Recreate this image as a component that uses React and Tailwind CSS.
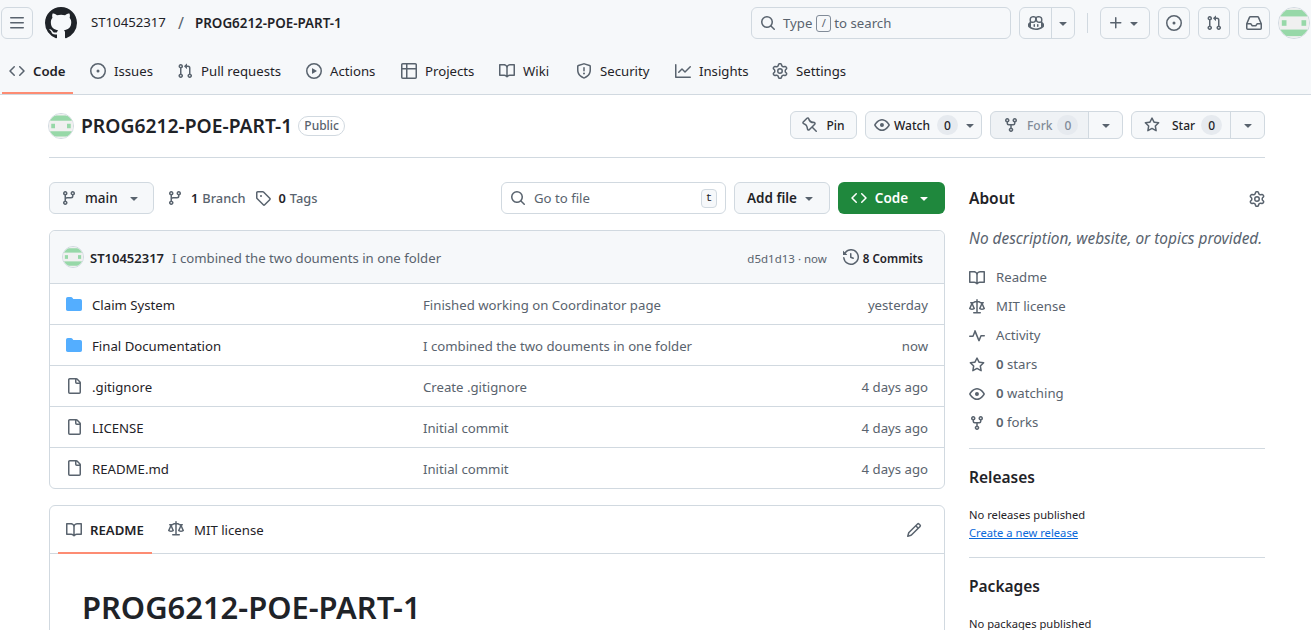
import React from "react";

const paths = {
  code: "M11.28 3.22l4.25 4.25a.75.75 0 0 1 0 1.06l-4.25 4.25a.749.749 0 0 1-1.275-.326.749.749 0 0 1 .215-.734L13.94 8l-3.72-3.72a.749.749 0 0 1 .326-1.275.749.749 0 0 1 .734.215Zm-6.56 0a.751.751 0 0 1 1.042.018.751.751 0 0 1 .018 1.042L2.06 8l3.72 3.72a.749.749 0 0 1-.326 1.275.749.749 0 0 1-.734-.215L.47 8.53a.75.75 0 0 1 0-1.06Z",
  issue: "M8 9.5a1.5 1.5 0 1 0 0-3 1.5 1.5 0 0 0 0 3Z M8 0a8 8 0 1 1 0 16A8 8 0 0 1 8 0ZM1.5 8a6.5 6.5 0 1 0 13 0 6.5 6.5 0 0 0-13 0Z",
  pull: "M1.5 3.25a2.25 2.25 0 1 1 3 2.122v5.256a2.251 2.251 0 1 1-1.5 0V5.372A2.25 2.25 0 0 1 1.5 3.25Zm5.677-.177L9.573.677A.25.25 0 0 1 10 .854V2.5h1A2.5 2.5 0 0 1 13.5 5v5.628a2.251 2.251 0 1 1-1.5 0V5a1 1 0 0 0-1-1h-1v1.646a.25.25 0 0 1-.427.177L7.177 3.427a.25.25 0 0 1 0-.354ZM3.75 2.5a.75.75 0 1 0 0 1.5.75.75 0 0 0 0-1.5Zm0 9.5a.75.75 0 1 0 0 1.5.75.75 0 0 0 0-1.5Zm8.25.75a.75.75 0 1 0 1.5 0 .75.75 0 0 0-1.5 0Z",
  play: "M8 0a8 8 0 1 1 0 16A8 8 0 0 1 8 0ZM1.5 8a6.5 6.5 0 1 0 13 0 6.5 6.5 0 0 0-13 0Zm4.879-2.773 4.264 2.559a.25.25 0 0 1 0 .428l-4.264 2.559A.25.25 0 0 1 6 10.559V5.442a.25.25 0 0 1 .379-.215Z",
  table: "M0 1.75C0 .784.784 0 1.75 0h12.5C15.216 0 16 .784 16 1.75v12.5A1.75 1.75 0 0 1 14.25 16H1.75A1.75 1.75 0 0 1 0 14.25ZM6.5 6.5v8h7.75a.25.25 0 0 0 .25-.25V6.5Zm8-1.5V1.75a.25.25 0 0 0-.25-.25H6.5V5Zm-13 1.5v7.75c0 .138.112.25.25.25H5v-8ZM5 5V1.5H1.75a.25.25 0 0 0-.25.25V5Z",
  book: "M0 1.75A.75.75 0 0 1 .75 1h4.253c1.227 0 2.317.59 3 1.501A3.743 3.743 0 0 1 11.006 1h4.245a.75.75 0 0 1 .75.75v10.5a.75.75 0 0 1-.75.75h-4.507a2.25 2.25 0 0 0-1.591.659l-.622.621a.75.75 0 0 1-1.06 0l-.622-.621A2.25 2.25 0 0 0 5.258 13H.75a.75.75 0 0 1-.75-.75Zm7.251 10.324.004-5.073-.002-2.253A2.25 2.25 0 0 0 5.003 2.5H1.5v9h3.757a3.75 3.75 0 0 1 1.994.574ZM8.755 4.75l-.004 7.322a3.752 3.752 0 0 1 1.992-.572H14.5v-9h-3.495a2.25 2.25 0 0 0-2.25 2.25Z",
  shield: "M7.467.133a1.748 1.748 0 0 1 1.066 0l5.25 1.68A1.75 1.75 0 0 1 15 3.48V7c0 1.566-.32 3.182-1.303 4.682-.983 1.498-2.585 2.813-5.032 3.855a1.697 1.697 0 0 1-1.33 0c-2.447-1.042-4.049-2.357-5.032-3.855C1.32 10.182 1 8.566 1 7V3.48a1.75 1.75 0 0 1 1.217-1.667Zm.61 1.429a.25.25 0 0 0-.153 0l-5.25 1.68a.25.25 0 0 0-.174.238V7c0 1.358.275 2.666 1.057 3.86.784 1.194 2.121 2.34 4.366 3.297a.196.196 0 0 0 .154 0c2.245-.956 3.582-2.104 4.366-3.298C13.225 9.666 13.5 8.36 13.5 7V3.48a.251.251 0 0 0-.174-.237l-5.25-1.68ZM8.75 4.75v3a.75.75 0 0 1-1.5 0v-3a.75.75 0 0 1 1.5 0ZM9 10.5a1 1 0 1 1-2 0 1 1 0 0 1 2 0Z",
  graph: "M1.5 1.75V13.5h13.75a.75.75 0 0 1 0 1.5H.75a.75.75 0 0 1-.75-.75V1.75a.75.75 0 0 1 1.5 0Zm14.28 2.53-5.25 5.25a.75.75 0 0 1-1.06 0L7 7.06 4.28 9.78a.751.751 0 0 1-1.042-.018.751.751 0 0 1-.018-1.042l3.25-3.25a.75.75 0 0 1 1.06 0L10 7.94l4.72-4.72a.751.751 0 0 1 1.042.018.751.751 0 0 1 .018 1.042Z",
  gear: "M8 0a8.2 8.2 0 0 1 .701.031C9.444.095 9.99.645 10.16 1.29l.288 1.107c.018.066.079.158.212.224.231.114.454.243.668.386.123.082.233.09.299.071l1.103-.303c.644-.176 1.392.021 1.82.63.27.385.506.792.704 1.218.315.675.111 1.422-.364 1.891l-.814.806c-.049.048-.098.147-.088.294.016.257.016.515 0 .772-.01.147.038.246.088.294l.814.806c.475.469.679 1.216.364 1.891a7.977 7.977 0 0 1-.704 1.217c-.428.61-1.176.807-1.82.63l-1.102-.302c-.067-.019-.177-.011-.3.071a5.909 5.909 0 0 1-.668.386c-.133.066-.194.158-.211.224l-.29 1.106c-.168.646-.715 1.196-1.458 1.26a8.006 8.006 0 0 1-1.402 0c-.743-.064-1.289-.614-1.458-1.26l-.289-1.106c-.018-.066-.079-.158-.212-.224a5.738 5.738 0 0 1-.668-.386c-.123-.082-.233-.09-.299-.071l-1.103.303c-.644.176-1.392-.021-1.82-.63a8.12 8.12 0 0 1-.704-1.218c-.315-.675-.111-1.422.363-1.891l.815-.806c.05-.048.098-.147.088-.294a6.214 6.214 0 0 1 0-.772c.01-.147-.038-.246-.088-.294l-.815-.806C.635 6.045.431 5.298.746 4.623a7.92 7.92 0 0 1 .704-1.217c.428-.61 1.176-.807 1.82-.63l1.102.302c.067.019.177.011.3-.071.214-.143.437-.272.668-.386.133-.066.194-.158.211-.224l.29-1.106C6.009.645 6.556.095 7.299.03 7.53.01 7.764 0 8 0Zm-.571 1.525c-.036.003-.108.036-.137.146l-.289 1.105c-.147.561-.549.967-.998 1.189-.173.086-.34.183-.5.29-.417.278-.97.423-1.529.27l-1.103-.303c-.109-.03-.175.016-.195.045-.22.312-.412.644-.573.99-.014.031-.021.11.059.19l.815.806c.411.406.562.957.53 1.456a4.709 4.709 0 0 0 0 .582c.032.499-.119 1.05-.53 1.456l-.815.806c-.081.08-.073.159-.059.19.162.346.353.677.573.989.02.03.085.076.195.046l1.102-.303c.56-.153 1.113-.008 1.53.27.161.107.328.204.501.29.447.222.85.629.997 1.189l.289 1.105c.029.109.101.143.137.146a6.6 6.6 0 0 0 1.142 0c.036-.003.108-.036.137-.146l.289-1.105c.147-.561.549-.967.998-1.189.173-.086.34-.183.5-.29.417-.278.97-.423 1.529-.27l1.103.303c.109.029.175-.016.195-.045.22-.313.411-.644.573-.99.014-.031.021-.11-.059-.19l-.815-.806c-.411-.406-.562-.957-.53-1.456a4.709 4.709 0 0 0 0-.582c-.032-.499.119-1.05.53-1.456l.815-.806c.081-.08.073-.159.059-.19a6.464 6.464 0 0 0-.573-.989c-.02-.03-.085-.076-.195-.046l-1.102.303c-.56.153-1.113.008-1.53-.27a4.44 4.44 0 0 0-.501-.29c-.447-.222-.85-.629-.997-1.189l-.289-1.105c-.029-.11-.101-.143-.137-.146a6.6 6.6 0 0 0-1.142 0ZM11 8a3 3 0 1 1-6 0 3 3 0 0 1 6 0ZM9.5 8a1.5 1.5 0 1 0-3.001.001A1.5 1.5 0 0 0 9.5 8Z",
  bars: "M1 2.75A.75.75 0 0 1 1.75 2h12.5a.75.75 0 0 1 0 1.5H1.75A.75.75 0 0 1 1 2.75Zm0 5A.75.75 0 0 1 1.75 7h12.5a.75.75 0 0 1 0 1.5H1.75A.75.75 0 0 1 1 7.75ZM1.75 12h12.5a.75.75 0 0 1 0 1.5H1.75a.75.75 0 0 1 0-1.5Z",
  github: "M8 0c4.42 0 8 3.58 8 8a8.013 8.013 0 0 1-5.45 7.59c-.4.08-.55-.17-.55-.38 0-.27.01-1.13.01-2.2 0-.75-.25-1.23-.54-1.48 1.78-.2 3.65-.88 3.65-3.95 0-.88-.31-1.59-.82-2.15.08-.2.36-1.02-.08-2.12 0 0-.67-.22-2.2.82-.64-.18-1.32-.27-2-.27-.68 0-1.36.09-2 .27-1.53-1.03-2.2-.82-2.2-.82-.44 1.1-.16 1.92-.08 2.12-.51.56-.82 1.28-.82 2.15 0 3.06 1.86 3.75 3.64 3.95-.23.2-.44.55-.51 1.07-.46.21-1.61.55-2.33-.66-.15-.24-.6-.83-1.23-.82-.67.01-.27.38.01.53.34.19.73.9.82 1.13.16.45.68 1.31 2.69.94 0 .67.01 1.3.01 1.49 0 .21-.15.45-.55.38A7.995 7.995 0 0 1 0 8c0-4.42 3.58-8 8-8Z",
  search: "M10.68 11.74a6 6 0 0 1-7.922-8.982 6 6 0 0 1 8.982 7.922l3.04 3.04a.749.749 0 0 1-.326 1.275.749.749 0 0 1-.734-.215ZM11.5 7a4.499 4.499 0 1 0-8.997 0A4.499 4.499 0 0 0 11.5 7Z",
  plus: "M7.75 2a.75.75 0 0 1 .75.75V7h4.25a.75.75 0 0 1 0 1.5H8.5v4.25a.75.75 0 0 1-1.5 0V8.5H2.75a.75.75 0 0 1 0-1.5H7V2.75A.75.75 0 0 1 7.75 2Z",
  inbox: "M2.8 2.06A1.75 1.75 0 0 1 4.41 1h7.18c.7 0 1.333.417 1.61 1.06l2.74 6.395c.04.093.06.194.06.295v4.5A1.75 1.75 0 0 1 14.25 15H1.75A1.75 1.75 0 0 1 0 13.25v-4.5c0-.101.02-.202.06-.295Zm1.61.44a.25.25 0 0 0-.23.152L1.887 8H4.75a.75.75 0 0 1 .6.3L6.625 10h2.75l1.275-1.7a.75.75 0 0 1 .6-.3h2.863L11.82 2.652a.25.25 0 0 0-.23-.152Zm10.09 7h-2.875l-1.275 1.7a.75.75 0 0 1-.6.3h-3.5a.75.75 0 0 1-.6-.3L4.375 9.5H1.5v3.75c0 .138.112.25.25.25h12.5a.25.25 0 0 0 .25-.25Z",
  pin: "M4.456.734a1.75 1.75 0 0 1 2.826.504l.613 1.327a3.081 3.081 0 0 0 2.084 1.707l2.454.584c1.332.317 1.8 1.972.832 2.94L11.06 10l3.72 3.72a.748.748 0 0 1-.332 1.265.75.75 0 0 1-.729-.205L10 11.06l-2.204 2.205c-.968.968-2.623.5-2.94-.832l-.584-2.454a3.081 3.081 0 0 0-1.707-2.084l-1.327-.613a1.75 1.75 0 0 1-.504-2.826L4.456.734ZM5.92 1.866a.25.25 0 0 0-.404-.072L1.794 5.516a.25.25 0 0 0 .072.404l1.328.613A4.582 4.582 0 0 1 5.73 9.63l.584 2.454a.25.25 0 0 0 .42.12l5.47-5.47a.25.25 0 0 0-.12-.42L9.63 6.13a4.583 4.583 0 0 1-3.098-2.537L5.92 1.866Z",
  eye: "M8 2c1.981 0 3.671.992 4.933 2.078 1.27 1.091 2.187 2.345 2.637 3.023a1.62 1.62 0 0 1 0 1.798c-.45.678-1.367 1.932-2.637 3.023C11.67 13.008 9.981 14 8 14c-1.981 0-3.671-.992-4.933-2.078C1.797 10.83.88 9.576.43 8.898a1.62 1.62 0 0 1 0-1.798c.45-.677 1.367-1.931 2.637-3.022C4.33 2.992 6.019 2 8 2ZM1.679 7.932a.12.12 0 0 0 0 .136c.411.622 1.241 1.75 2.366 2.717C5.176 11.758 6.527 12.5 8 12.5c1.473 0 2.825-.742 3.955-1.715 1.124-.967 1.954-2.096 2.366-2.717a.12.12 0 0 0 0-.136c-.412-.621-1.242-1.75-2.366-2.717C10.824 4.242 9.473 3.5 8 3.5c-1.473 0-2.825.742-3.955 1.715-1.124.967-1.954 2.096-2.366 2.717ZM8 10a2 2 0 1 1-.001-3.999A2 2 0 0 1 8 10Z",
  fork: "M5 5.372v.878c0 .414.336.75.75.75h4.5a.75.75 0 0 0 .75-.75v-.878a2.25 2.25 0 1 1 1.5 0v.878a2.25 2.25 0 0 1-2.25 2.25h-1.5v2.128a2.251 2.251 0 1 1-1.5 0V8.5h-1.5A2.25 2.25 0 0 1 3.5 6.25v-.878a2.25 2.25 0 1 1 1.5 0ZM5 3.25a.75.75 0 1 0-1.5 0 .75.75 0 0 0 1.5 0Zm6.75.75a.75.75 0 1 0 0-1.5.75.75 0 0 0 0 1.5Zm-3 8.75a.75.75 0 1 0-1.5 0 .75.75 0 0 0 1.5 0Z",
  star: "M8 .25a.75.75 0 0 1 .673.418l1.882 3.815 4.21.612a.75.75 0 0 1 .416 1.279l-3.046 2.97.719 4.192a.751.751 0 0 1-1.088.791L8 12.347l-3.766 1.98a.75.75 0 0 1-1.088-.79l.72-4.194L.818 6.374a.75.75 0 0 1 .416-1.28l4.21-.611L7.327.668A.75.75 0 0 1 8 .25Zm0 2.445L6.615 5.5a.75.75 0 0 1-.564.41l-3.097.45 2.24 2.184a.75.75 0 0 1 .216.664l-.528 3.084 2.769-1.456a.75.75 0 0 1 .698 0l2.77 1.456-.53-3.084a.75.75 0 0 1 .216-.664l2.24-2.183-3.096-.45a.75.75 0 0 1-.564-.41L8 2.694Z",
  branch: "M9.5 3.25a2.25 2.25 0 1 1 3 2.122V6A2.5 2.5 0 0 1 10 8.5H6a1 1 0 0 0-1 1v1.128a2.251 2.251 0 1 1-1.5 0V5.372a2.25 2.25 0 1 1 1.5 0v1.836A2.493 2.493 0 0 1 6 7h4a1 1 0 0 0 1-1v-.628A2.25 2.25 0 0 1 9.5 3.25Zm-6 0a.75.75 0 1 0 1.5 0 .75.75 0 0 0-1.5 0Zm8.25-.75a.75.75 0 1 0 0 1.5.75.75 0 0 0 0-1.5ZM4.25 12a.75.75 0 1 0 0 1.5.75.75 0 0 0 0-1.5Z",
  tag: "M1 7.775V2.75C1 1.784 1.784 1 2.75 1h5.025c.464 0 .91.184 1.238.513l6.25 6.25a1.75 1.75 0 0 1 0 2.474l-5.026 5.026a1.75 1.75 0 0 1-2.474 0l-6.25-6.25A1.752 1.752 0 0 1 1 7.775Zm1.5 0c0 .066.026.13.073.177l6.25 6.25a.25.25 0 0 0 .354 0l5.025-5.025a.25.25 0 0 0 0-.354l-6.25-6.25a.25.25 0 0 0-.177-.073H2.75a.25.25 0 0 0-.25.25ZM6 5a1 1 0 1 1 0 2 1 1 0 0 1 0-2Z",
  history: "m.427 1.927 1.215 1.215a8.002 8.002 0 1 1-1.6 5.685.75.75 0 1 1 1.493-.154 6.5 6.5 0 1 0 1.18-4.458l1.358 1.358A.25.25 0 0 1 3.896 6H.25A.25.25 0 0 1 0 5.75V2.104a.25.25 0 0 1 .427-.177ZM7.75 4a.75.75 0 0 1 .75.75v2.992l2.028.812a.75.75 0 0 1-.557 1.392l-2.5-1A.751.751 0 0 1 7 8.25v-3.5A.75.75 0 0 1 7.75 4Z",
  folder: "M1.75 1A1.75 1.75 0 0 0 0 2.75v10.5C0 14.216.784 15 1.75 15h12.5A1.75 1.75 0 0 0 16 13.25v-8.5A1.75 1.75 0 0 0 14.25 3H7.5a.25.25 0 0 1-.2-.1l-.9-1.2C6.07 1.26 5.55 1 5 1H1.75Z",
  file: "M2 1.75C2 .784 2.784 0 3.75 0h6.586c.464 0 .909.184 1.237.513l2.914 2.914c.329.328.513.773.513 1.237v9.586A1.75 1.75 0 0 1 13.25 16h-9.5A1.75 1.75 0 0 1 2 14.25Zm1.75-.25a.25.25 0 0 0-.25.25v12.5c0 .138.112.25.25.25h9.5a.25.25 0 0 0 .25-.25V6h-2.75A1.75 1.75 0 0 1 9 4.25V1.5Zm6.75.062V4.25c0 .138.112.25.25.25h2.688l-.011-.013-2.914-2.914-.013-.011Z",
  law: "M8.75.75V2h.985c.304 0 .603.08.867.231l1.29.736c.038.022.08.033.124.033h2.234a.75.75 0 0 1 0 1.5h-.427l2.111 4.692a.75.75 0 0 1-.154.838l-.53-.53.529.531-.001.002-.002.002-.006.006-.006.005-.01.01-.045.04c-.21.176-.441.327-.686.45C14.556 10.78 13.88 11 13 11a4.498 4.498 0 0 1-2.023-.454 3.544 3.544 0 0 1-.686-.45l-.045-.04-.016-.015-.006-.006-.004-.004v-.001a.75.75 0 0 1-.154-.838L12.178 4.5h-.162c-.305 0-.604-.079-.868-.231l-1.29-.736a.245.245 0 0 0-.124-.033H8.75V13h2.5a.75.75 0 0 1 0 1.5h-6.5a.75.75 0 0 1 0-1.5h2.5V3.5h-.984a.245.245 0 0 0-.124.033l-1.289.737c-.265.15-.564.23-.869.23h-.162l2.112 4.692a.75.75 0 0 1-.154.838l-.53-.53.529.531-.001.002-.002.002-.006.006-.016.015-.045.04c-.21.176-.441.327-.686.45C4.556 10.78 3.88 11 3 11a4.498 4.498 0 0 1-2.023-.454 3.544 3.544 0 0 1-.686-.45l-.045-.04-.016-.015-.006-.006-.004-.004v-.001a.75.75 0 0 1-.154-.838L2.178 4.5H1.75a.75.75 0 0 1 0-1.5h2.234a.249.249 0 0 0 .125-.033l1.288-.737c.265-.15.564-.23.869-.23h.984V.75a.75.75 0 0 1 1.5 0Zm2.945 8.477c.285.135.718.273 1.305.273s1.02-.138 1.305-.273L13 6.327Zm-10 0c.285.135.718.273 1.305.273s1.02-.138 1.305-.273L3 6.327Z",
  pulse: "M6 2c.306 0 .582.187.696.471L10 10.731l1.304-3.26A.751.751 0 0 1 12 7h3.25a.75.75 0 0 1 0 1.5h-2.742l-1.812 4.528a.751.751 0 0 1-1.392 0L6 5.269 4.696 8.529A.751.751 0 0 1 4 9H.75a.75.75 0 0 1 0-1.5h2.742l1.812-4.529A.751.751 0 0 1 6 2Z",
  pencil: "M11.013 1.427a1.75 1.75 0 0 1 2.474 0l1.086 1.086a1.75 1.75 0 0 1 0 2.474l-8.61 8.61c-.21.21-.47.364-.756.445l-3.251.93a.75.75 0 0 1-.927-.928l.929-3.25c.081-.286.235-.547.445-.758l8.61-8.61Zm.176 4.823L9.75 4.81l-6.286 6.287a.253.253 0 0 0-.064.108l-.558 1.953 1.953-.558a.253.253 0 0 0 .108-.064Zm1.238-3.763a.25.25 0 0 0-.354 0L10.811 3.75l1.439 1.44 1.263-1.263a.25.25 0 0 0 0-.354Z",
  copilot: "M7.998 15.035c-4.562 0-7.873-2.914-7.998-3.749V9.338c.085-.628.677-1.686 1.588-2.065.013-.07.024-.143.036-.218.029-.183.06-.384.126-.612-.201-.508-.254-1.084-.254-1.656 0-.87.128-1.769.693-2.484.579-.733 1.494-1.124 2.724-1.261 1.206-.134 2.262.034 2.944.765.05.053.096.108.139.165.044-.057.094-.112.143-.165.682-.731 1.738-.899 2.944-.765 1.23.137 2.145.528 2.724 1.261.566.715.693 1.614.693 2.484 0 .572-.053 1.148-.254 1.656.066.228.098.429.126.612.012.076.024.148.037.218.924.385 1.522 1.471 1.591 2.095v1.872c0 .766-3.351 3.795-8.002 3.795Zm0-1.485c2.28 0 4.584-1.11 5.002-1.433V7.862l-.023-.116c-.49.21-1.075.291-1.727.291-1.146 0-2.059-.327-2.71-.991A3.222 3.222 0 0 1 8 6.303a3.24 3.24 0 0 1-.544.743c-.65.664-1.563.991-2.71.991-.652 0-1.236-.081-1.727-.291l-.023.116v4.255c.419.323 2.722 1.433 5.002 1.433ZM6.762 2.83c-.193-.206-.637-.413-1.682-.297-1.019.113-1.479.404-1.713.7-.247.312-.369.789-.369 1.554 0 .793.129 1.171.308 1.371.162.181.519.379 1.442.379.853 0 1.339-.235 1.638-.54.315-.322.527-.827.617-1.553.117-.935-.037-1.395-.241-1.614Zm4.155-.297c-1.044-.116-1.488.091-1.681.297-.204.219-.359.679-.242 1.614.091.726.303 1.231.618 1.553.299.305.784.54 1.638.54.922 0 1.28-.198 1.442-.379.179-.2.308-.578.308-1.371 0-.765-.123-1.242-.37-1.554-.233-.296-.693-.587-1.713-.7Z M6.25 9.037a.75.75 0 0 1 .75.75v1.501a.75.75 0 0 1-1.5 0V9.787a.75.75 0 0 1 .75-.75Zm4.25.75v1.501a.75.75 0 0 1-1.5 0V9.787a.75.75 0 0 1 1.5 0Z",
  caret: "m4.427 7.427 3.396 3.396a.25.25 0 0 0 .354 0l3.396-3.396A.25.25 0 0 0 11.396 7H4.604a.25.25 0 0 0-.177.427Z",
};

const Icon = ({ name, className = "w-4 h-4 text-[#59636e]" }) => (
  <svg viewBox="0 0 16 16" fill="currentColor" className={`shrink-0 ${className}`}>
    <path d={paths[name]} />
  </svg>
);

const Avatar = ({ className }) => (
  <svg viewBox="0 0 32 32" className={`shrink-0 rounded-full border border-[#d1d9e0] ${className}`}>
    <rect width="32" height="32" fill="#f0f0f0" />
    <rect width="32" height="7" y="2" fill="#97d8a8" />
    <rect width="32" height="7" y="23" fill="#97d8a8" />
    <rect x="3" y="13" width="5" height="6" fill="#97d8a8" />
    <rect x="24" y="13" width="5" height="6" fill="#97d8a8" />
  </svg>
);

// label widths keep the tabs on the same pitch as the real page
const tabs = [
  ["code", "Code", "w-[33px]"],
  ["issue", "Issues", "w-[39px]"],
  ["pull", "Pull requests", "w-[81px]"],
  ["play", "Actions", "w-[47px]"],
  ["table", "Projects", "w-[50px]"],
  ["book", "Wiki", "w-[29px]"],
  ["shield", "Security", "w-[51px]"],
  ["graph", "Insights", "w-[49px]"],
  ["gear", "Settings", "w-[52px]"],
];

const files = [
  ["folder", "Claim System", "Finished working on Coordinator page", "yesterday"],
  ["folder", "Final Documentation", "I combined the two douments in one folder", "now"],
  ["file", ".gitignore", "Create .gitignore", "4 days ago"],
  ["file", "LICENSE", "Initial commit", "4 days ago"],
  ["file", "README.md", "Initial commit", "4 days ago"],
];

const aboutLinks = [
  ["book", null, "Readme"],
  ["law", null, "MIT license"],
  ["pulse", null, "Activity"],
  ["star", "0", "stars"],
  ["eye", "0", "watching"],
  ["fork", "0", "forks"],
];

const HeaderButton = ({ icon }) => (
  <div className="w-8 h-8 flex items-center justify-center border border-[#d1d9e0] rounded-md">
    <Icon name={icon} />
  </div>
);

const Count = ({ children, muted }) => (
  <span className={`w-[21px] h-[20px] pt-[2px] flex items-center justify-center rounded-full bg-[#e6eaef] text-[12px] font-medium ${muted ? "text-[#818b98]" : "text-[#1f2328]"}`}>
    {children}
  </span>
);

const App = () => {
  return (
    <div className="h-[630px] overflow-hidden bg-white text-[#1f2328] text-[13.2px] font-['Noto_Sans',sans-serif]">
      <header className="bg-[#f6f8fa] border-b border-[#d1d9e0] h-[95px]">
        <div className="h-[46px] flex items-center pl-px">
          <div className="w-8 h-8 flex items-center justify-center border border-[#d1d9e0] rounded-md">
            <Icon name="bars" />
          </div>
          <Icon name="github" className="w-8 h-8 ml-[12px] text-[#1f2328]" />
          <span className="ml-[14px] w-[87px]">ST10452317</span>
          <span className="text-[#59636e] text-[16px] w-[17px]">/</span>
          <span className="font-semibold text-[13.4px]">PROG6212-POE-PART-1</span>

          <div className="ml-auto flex items-center gap-2">
            <div className="w-[260px] h-8 flex items-center border border-[#d1d9e0] rounded-md px-2 text-[#59636e]">
              <Icon name="search" />
              <span className="ml-[7px] mt-[2px]">Type</span>
              <span className="mx-1 w-[15px] h-[17px] border border-[#818b98] rounded-[3px] text-[11px] flex items-center justify-center">/</span>
              <span className="mt-[2px] -ml-px">to search</span>
            </div>
            <div className="w-[56px] h-8 flex border border-[#d1d9e0] rounded-md">
              <div className="w-8 flex items-center justify-center border-r border-[#d1d9e0]">
                <Icon name="copilot" />
              </div>
              <div className="flex-1 flex items-center justify-center">
                <Icon name="caret" />
              </div>
            </div>
            <div className="w-px h-5 bg-[#d1d9e0] mx-[4px]"></div>
            <div className="w-[50px] h-8 flex items-center justify-center gap-0.5 border border-[#d1d9e0] rounded-md">
              <Icon name="plus" />
              <Icon name="caret" />
            </div>
            <HeaderButton icon="issue" />
            <HeaderButton icon="pull" />
            <HeaderButton icon="inbox" />
            <Avatar className="w-8 h-8 mr-px" />
          </div>
        </div>

        <nav className="h-[48px] flex items-center gap-2 pl-px pt-[2px]">
          {tabs.map(([icon, label, width], i) => (
            <div key={label} className="relative h-full flex items-center gap-2 px-2">
              <Icon name={icon} />
              <span className={`${width} mt-[2px] whitespace-nowrap ${i === 0 ? "font-semibold" : ""}`}>{label}</span>
              {i === 0 && (
                <div className="absolute left-px right-px bottom-0 h-[2px] bg-[#fd8c73]"></div>
              )}
            </div>
          ))}
        </nav>
      </header>

      <div className="pl-[49px] pr-[46px]">
        <div className="h-[63px] flex items-center border-b border-[#d1d9e0] pb-[2px]">
          <Avatar className="w-[26px] h-[26px] -ml-px mt-[1px]" />
          <span className="ml-[7px] mt-[2px] text-[19.3px] font-semibold">PROG6212-POE-PART-1</span>
          <span className="ml-[6px] mt-[2px] h-[20px] px-[5px] flex items-center border border-[#d1d9e0] rounded-full text-[12px] font-medium text-[#59636e]">Public</span>

          <div className="ml-auto flex items-center gap-2 text-[12px] font-medium">
            <div className="w-[67px] h-7 flex items-center justify-center gap-2 border border-[#d1d9e0] rounded-md bg-[#f6f8fa]">
              <Icon name="pin" />
              <span className="mt-[2px]">Pin</span>
            </div>
            <div className="w-[117px] h-7 flex items-center gap-1 pl-2 border border-[#d1d9e0] rounded-md bg-[#f6f8fa]">
              <Icon name="eye" />
              <span className="mt-[2px]">Watch</span>
              <span className="ml-[3px]"><Count>0</Count></span>
              <Icon name="caret" />
            </div>
            <div className="w-[133px] h-7 flex border border-[#d1d9e0] rounded-md bg-[#eff2f5]">
              <div className="w-[98px] flex items-center gap-2 pl-3 border-r border-[#d1d9e0] text-[#818b98]">
                <Icon name="fork" />
                <span className="mt-[2px]">Fork</span>
                <span className="-ml-[3px]"><Count muted>0</Count></span>
              </div>
              <div className="flex-1 flex items-center justify-center bg-[#f6f8fa] rounded-r-md">
                <Icon name="caret" />
              </div>
            </div>
            <div className="w-[134px] h-7 flex border border-[#d1d9e0] rounded-md bg-[#f6f8fa]">
              <div className="w-[99px] flex items-center pl-3 border-r border-[#d1d9e0]">
                <Icon name="star" />
                <span className="ml-3 mt-[2px]">Star</span>
                <span className="ml-[6px]"><Count>0</Count></span>
              </div>
              <div className="flex-1 flex items-center justify-center">
                <Icon name="caret" />
              </div>
            </div>
          </div>
        </div>

        <div className="flex gap-6 pt-6">
          <main className="w-[896px] shrink-0">
            <div className="h-8 flex items-center">
              <div className="w-[105px] h-8 flex items-center gap-2 pl-[11px] border border-[#d1d9e0] rounded-md bg-[#f6f8fa] text-[13.5px] font-medium">
                <Icon name="branch" />
                <span>main</span>
                <Icon name="caret" />
              </div>
              <div className="ml-[13px] flex items-center text-[12.8px] font-medium text-[#59636e]">
                <Icon name="branch" />
                <span className="ml-2 mt-[2px] font-semibold text-[#1f2328]">1</span>
                <span className="ml-1 mt-[2px]">Branch</span>
                <Icon name="tag" className="w-4 h-4 ml-[9px] text-[#59636e]" />
                <span className="ml-2 mt-[2px] font-semibold text-[#1f2328]">0</span>
                <span className="ml-1 mt-[2px]">Tags</span>
              </div>

              <div className="ml-auto flex gap-2 text-[13.5px]">
                <div className="w-[225px] h-8 flex items-center border border-[#d1d9e0] rounded-md px-2 text-[13.2px] text-[#59636e]">
                  <Icon name="search" />
                  <span className="ml-2 mt-[2px]">Go to file</span>
                  <span className="ml-auto w-[16px] h-[19px] flex items-center justify-center border border-[#d1d9e0] rounded-[4px] bg-[#f6f8fa] text-[11px] text-[#1f2328] font-['Liberation_Mono',monospace]">t</span>
                </div>
                <div className="w-[96px] h-8 flex items-center justify-center gap-1 border border-[#d1d9e0] rounded-md bg-[#f6f8fa] font-semibold">
                  <span>Add file</span>
                  <Icon name="caret" />
                </div>
                <div className="w-[107px] h-8 flex items-center justify-center gap-2 rounded-md bg-[#1f883d] text-white font-semibold">
                  <Icon name="code" className="w-4 h-4 text-white" />
                  <span>Code</span>
                  <Icon name="caret" className="w-4 h-4 text-white" />
                </div>
              </div>
            </div>

            <div className="mt-4 border border-[#d1d9e0] rounded-md">
              <div className="h-[52px] flex items-center bg-[#f6f8fa] rounded-t-md pl-3 pr-[21px] text-[13.2px]">
                <Avatar className="w-[22px] h-[22px]" />
                <span className="ml-[6px] mt-[4px] font-semibold text-[13px]">ST10452317</span>
                <span className="ml-2 mt-[4px] text-[#59636e]">I combined the two douments in one folder</span>
                <span className="ml-auto mt-[4px] text-[11.5px] text-[#59636e]">d5d1d13 · now</span>
                <Icon name="history" className="w-4 h-4 ml-4 text-[#59636e]" />
                <span className="ml-1 mt-[4px] text-[11.6px] font-semibold">8 Commits</span>
              </div>
              {files.map(([icon, name, message, date]) => (
                <div key={name} className="h-[41px] flex items-center border-t border-[#d1d9e0] px-4">
                  <Icon name={icon} className={`w-4 h-4 ${icon === "folder" ? "text-[#54aeff]" : "text-[#59636e]"}`} />
                  <span className="ml-2.5 mt-[4px] w-[331px]">{name}</span>
                  <span className="mt-[4px] text-[#59636e]">{message}</span>
                  <span className="ml-auto mt-[4px] text-[#59636e]">{date}</span>
                </div>
              ))}
            </div>

            <div className="mt-4 border border-[#d1d9e0] rounded-md h-[200px]">
              <div className="h-[48px] flex items-center border-b border-[#d1d9e0] pl-2 pr-[22px]">
                <div className="relative h-full flex items-center gap-2 px-2">
                  <Icon name="book" />
                  <span className="mt-[2px] font-semibold">README</span>
                  <div className="absolute left-0 right-0 bottom-[-1px] h-[2px] bg-[#fd8c73]"></div>
                </div>
                <div className="ml-2 flex items-center gap-2.5 px-2">
                  <Icon name="law" />
                  <span className="mt-[2px]">MIT license</span>
                </div>
                <Icon name="pencil" className="w-4 h-4 ml-auto text-[#59636e]" />
              </div>
              <h1 className="ml-8 mt-[33px] text-[30.9px] font-semibold leading-[40px]">PROG6212-POE-PART-1</h1>
            </div>
          </main>

          <aside className="w-[296px] shrink-0">
            <div className="h-8 flex items-center justify-between pt-[1px]">
              <h2 className="text-[15.5px] font-semibold">About</h2>
              <Icon name="gear" />
            </div>
            <p className="mt-[13px] text-[15.4px] leading-[24px] italic text-[#59636e]">No description, website, or topics provided.</p>
            <ul className="mt-[12px] text-[#59636e]">
              {aboutLinks.map(([icon, count, label]) => (
                <li key={label} className="h-[29px] flex items-center">
                  <Icon name={icon} />
                  <span className="ml-[11px]">
                    {count && <span className="font-semibold">{count} </span>}
                    {label}
                  </span>
                </li>
              ))}
            </ul>
            <div className="mt-[11px] border-t border-[#d1d9e0] pt-[16px]">
              <h2 className="text-[15.5px] font-semibold leading-[24px]">Releases</h2>
              <p className="mt-[17px] text-[11.2px] leading-[18px]">No releases published</p>
              <a className="text-[11.2px] leading-[18px] text-[#0969da] underline block">Create a new release</a>
            </div>
            <div className="mt-[15px] border-t border-[#d1d9e0] pt-[16px]">
              <h2 className="text-[15.5px] font-semibold leading-[24px]">Packages</h2>
              <p className="mt-[17px] text-[11.2px] leading-[18px]">No packages published</p>
            </div>
          </aside>
        </div>
      </div>
    </div>
  );
};

export default App;
